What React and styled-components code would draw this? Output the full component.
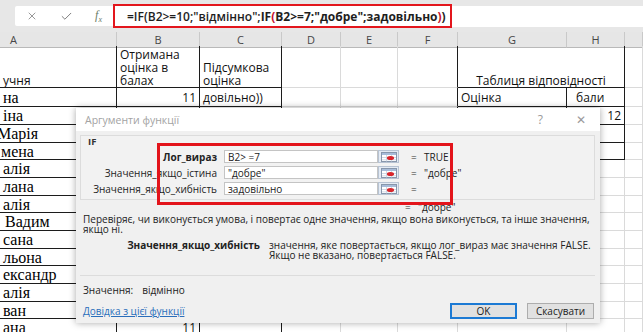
import React from 'react';
import styled, { createGlobalStyle } from 'styled-components';
import { X, Check } from 'lucide-react';

const COLS = [117, 83, 82, 59, 57, 60, 109, 58, 18];
const LETTERS = ['A', 'B', 'C', 'D', 'E', 'F', 'G', 'H', ''];
const TEMPLATE = COLS.map((c) => c + 'px').join(' ');

// visible part of the sheet, column A is scrolled so names are cut on the left
const ROWS = [
  {
    h: 42,
    top: true,
    cells: {
      0: { sans: true, lines: ['учня'] },
      1: { lines: ['Отримана', 'оцінка в', 'балах'] },
      2: { lines: ['Підсумкова', 'оцінка'] },
      6: { lines: ['Таблиця відповідності'], span: 2, center: true },
    },
  },
  {
    h: 19,
    cells: {
      0: { name: 'на' },
      1: { lines: ['11'], right: true },
      2: { lines: ['довільно))'] },
      6: { lines: ['Оцінка'] },
      7: { lines: ['бали'], indent: 9 },
    },
  },
  { h: 18, cells: { 0: { name: 'іна' }, 7: { lines: ['12'], right: true } } },
  { h: 18, cells: { 0: { name: 'Марія', shift: -6 } } },
  { h: 17, cells: { 0: { name: 'мена', shift: -2 } } },
  { h: 18, cells: { 0: { name: 'алія' } } },
  { h: 18, cells: { 0: { name: 'лана' } } },
  { h: 17, cells: { 0: { name: 'алія' } } },
  { h: 18, cells: { 0: { name: 'Вадим', indent: 5 } } },
  { h: 18, cells: { 0: { name: 'сана' } } },
  { h: 17, cells: { 0: { name: 'льона' } } },
  { h: 18, cells: { 0: { name: 'ександр' } } },
  { h: 18, cells: { 0: { name: 'алія' } } },
  { h: 17, cells: { 0: { name: 'ван' } } },
  { h: 18, cells: { 0: { name: 'ана' }, 1: { lines: ['11'], right: true } } },
];

const ARGS = [
  { label: 'Лог_вираз', bold: true, value: 'B2> =7', result: 'TRUE' },
  { label: 'Значення_якщо_істина', value: '"добре"', result: '"добре"' },
  { label: 'Значення_якщо_хибність', value: 'задовільно', result: '' },
];

const GlobalStyle = createGlobalStyle`
  html, body { margin: 0; padding: 0; }
  body {
    background: #fff;
    font-family: "Open Sans", "Noto Sans", sans-serif;
    overflow: hidden;
  }
`;

const Screen = styled.div`
  position: relative;
  width: 643px;
  height: 332px;
  overflow: hidden;
  background: #fff;
`;

const FormulaBar = styled.div`
  display: flex;
  align-items: center;
  height: 32px;
  padding-left: 15px;
  background: #e7e7e7;
`;

const IconBox = styled.div`
  display: grid;
  grid-template-columns: 33px 36px 29px;
  justify-items: center;
  align-items: center;
  width: 98px;
  height: 20px;
  background: #fff;
  border-radius: 2px 0 0 2px;
  color: #6b6b6b;
`;

const Fx = styled.span`
  font-family: "Liberation Serif", serif;
  font-style: italic;
  font-size: 12px;
  color: #6d7d68;
  sub {
    font-size: 8px;
  }
`;

const FormulaInput = styled.div`
  box-sizing: border-box;
  display: flex;
  align-items: center;
  width: 339px;
  height: 24px;
  padding-left: 12px;
  border: 2.5px solid #e3161d;
  background: #fff;
  font-size: 12px;
  font-weight: 600;
  color: #1e1e1e;
  white-space: nowrap;
  b {
    font-weight: 700;
  }
  .paren {
    color: #c8102e;
  }
`;

const FormulaRest = styled.div`
  flex: 1;
  height: 21px;
  background: #fff;
`;

const Sheet = styled.div`
  display: flex;
  flex-direction: column;
`;

const Row = styled.div`
  display: grid;
  grid-template-columns: ${TEMPLATE};
  height: ${(p) => p.$h}px;
`;

const HeaderCell = styled.div`
  box-sizing: border-box;
  display: flex;
  align-items: center;
  justify-content: ${(p) => (p.$left ? 'flex-start' : 'center')};
  padding-left: ${(p) => (p.$left ? 10 : 0)}px;
  background: #e6e6e6;
  border-right: 1px solid #c9c9c9;
  border-bottom: 1px solid #b9b9b9;
  font-size: 11px;
  color: #474747;
`;

const Cell = styled.div`
  box-sizing: border-box;
  grid-column: span ${(p) => p.$span || 1};
  display: flex;
  flex-direction: column;
  justify-content: ${(p) => (p.$top ? 'flex-end' : 'center')};
  align-items: ${(p) => (p.$center ? 'center' : p.$right ? 'flex-end' : 'flex-start')};
  padding: 0 3px 0 ${(p) => p.$indent ?? 3}px;
  border-right: 1px solid ${(p) => (p.$darkR ? '#1c1c1c' : '#dadada')};
  border-bottom: 1px solid ${(p) => (p.$darkB ? '#1c1c1c' : '#dadada')};
  overflow: hidden;
  white-space: nowrap;
  font-size: 12px;
  line-height: 13px;
  color: #111;
`;

const Name = styled.span`
  margin-left: ${(p) => p.$shift || 0}px;
  font-family: "Liberation Serif", "Times New Roman", serif;
  font-size: 16px;
  line-height: 17px;
  color: #000;
`;

const Dialog = styled.div`
  position: absolute;
  left: 76px;
  top: 108px;
  width: 524px;
  height: 215px;
  display: flex;
  flex-direction: column;
  background: #f0f0f0;
  box-shadow: 0 0 7px rgba(0, 0, 0, 0.35);
  font-size: 10px;
  color: #1a1a1a;
`;

const TitleBar = styled.div`
  display: flex;
  align-items: center;
  height: 23px;
  padding-left: 9px;
  background: #fff;
  color: #a3a3a3;
  font-size: 10.5px;
`;

const TitleButtons = styled.div`
  display: flex;
  gap: 33px;
  margin-left: auto;
  margin-right: 14px;
  font-size: 12px;
  color: #9a9a9a;
`;

const Body = styled.div`
  display: flex;
  flex-direction: column;
  flex: 1;
  padding: 4px 5px 0 4px;
`;

const Group = styled.div`
  box-sizing: border-box;
  height: 65px;
  border: 1px solid #dcdcdc;
  background: #f2f2f2;
`;

const GroupLabel = styled.div`
  height: 10px;
  padding: 1px 0 0 7px;
  font-size: 9.5px;
  font-weight: 700;
  line-height: 10px;
  color: #333;
`;

const ArgList = styled.div`
  display: flex;
  flex-direction: column;
  gap: 3px;
  margin-top: 3px;
`;

const ArgRow = styled.div`
  display: flex;
  align-items: center;
  height: 13px;
`;

const ArgLabel = styled.div`
  width: 136px;
  text-align: right;
  font-weight: ${(p) => (p.$bold ? 700 : 400)};
  color: #222;
`;

const ArgInput = styled.div`
  box-sizing: border-box;
  display: flex;
  align-items: center;
  width: 154px;
  height: 13px;
  margin-left: 7px;
  padding-left: 3px;
  background: #fff;
  border: 1px solid #c4c4c4;
  color: #222;
`;

const RefButton = styled.div`
  box-sizing: border-box;
  display: flex;
  align-items: center;
  justify-content: center;
  width: 21px;
  height: 13px;
  background: #e4ebf4;
  border: 1px solid #b7c3d3;
`;

const Eq = styled.span`
  width: 6px;
  margin-left: ${(p) => p.$ml ?? 12}px;
  color: #333;
`;

const EqValue = styled.span`
  margin-left: 7px;
  color: #222;
`;

const ResultLine = styled.div`
  display: flex;
  align-items: center;
  height: 14px;
  padding-left: 325px;
`;

const Text = styled.div`
  padding-left: 3px;
  line-height: 10px;
  color: #222;
`;

const ArgHelp = styled.div`
  display: grid;
  grid-template-columns: 180px 1fr;
  column-gap: 9px;
  margin-top: 6px;
  line-height: 10px;
  color: #222;
  b {
    text-align: right;
    font-weight: 700;
  }
`;

const Separator = styled.div`
  height: 1px;
  margin-top: 15px;
  background: #dcdcdc;
`;

const ValueLine = styled.div`
  display: flex;
  gap: 9px;
  margin-top: 7px;
  padding-left: 3px;
  color: #222;
`;

const Footer = styled.div`
  display: flex;
  align-items: center;
  margin-top: 6px;
  padding-left: 3px;
`;

const HelpLink = styled.a`
  color: #2a6ebb;
  text-decoration: underline;
`;

const Buttons = styled.div`
  display: flex;
  gap: 10px;
  margin-left: auto;
  margin-right: 1px;
`;

const Button = styled.div`
  box-sizing: border-box;
  display: flex;
  align-items: center;
  justify-content: center;
  width: 67px;
  height: 16px;
  background: #e1e1e1;
  border: ${(p) => (p.$primary ? '2px solid #1c7ad4' : '1px solid #adadad')};
  color: #222;
`;

const Highlight = styled.div`
  position: absolute;
  left: 81px;
  top: 35px;
  width: 296px;
  height: 62px;
  box-sizing: border-box;
  border: 3px solid #e3141b;
  pointer-events: none;
`;

function RefIcon() {
  return (
    <svg width="16" height="10" viewBox="0 0 16 10">
      <rect x="0.5" y="0.5" width="15" height="9" fill="#fff" stroke="#8796ab" />
      <rect x="1" y="1" width="14" height="2" fill="#a7bcd9" />
      <path d="M1 5.5h14M1 7.8h14M5.5 3v6.5M10.5 3v6.5" stroke="#c7d1df" strokeWidth="0.8" />
      <ellipse cx="9.5" cy="6" rx="3.6" ry="2" fill="#d8262c" />
    </svg>
  );
}

function cellBorders(row, col) {
  if (col <= 2) return { dr: true, db: true };
  if (col === 5 && row <= 4) return { dr: true, db: false };
  if ((col === 6 || col === 7) && row <= 4) return { dr: true, db: true };
  return { dr: false, db: false };
}

function SheetRow({ row, index }) {
  const out = [];
  for (let c = 0; c < COLS.length; c++) {
    const data = row.cells[c];
    const { dr, db } = cellBorders(index, c);
    out.push(
      <Cell
        key={c}
        $span={data?.span}
        $top={row.top}
        $right={data?.right}
        $center={data?.center}
        $indent={data?.indent}
        $darkR={dr || (data?.span && index <= 4)}
        $darkB={db}
      >
        {data?.name && <Name $shift={data.shift}>{data.name}</Name>}
        {data?.lines && data.lines.map((l) => <span key={l}>{l}</span>)}
      </Cell>
    );
    if (data?.span) c += data.span - 1;
  }
  return <Row $h={row.h}>{out}</Row>;
}

export default function App() {
  return (
    <Screen>
      <GlobalStyle />
      <FormulaBar>
        <IconBox>
          <X size={12} strokeWidth={1.4} />
          <Check size={13} strokeWidth={1.6} />
          <Fx>
            f<sub>x</sub>
          </Fx>
        </IconBox>
        <FormulaInput>
          <span>=IF(B2&gt;=10;"відмінно";</span>
          <b>IF</b>
          <b className="paren">(</b>
          <b>B2&gt;=7;"добре";задовільно</b>
          <b className="paren">)</b>
          <b>)</b>
        </FormulaInput>
        <FormulaRest />
      </FormulaBar>

      <Sheet>
        <Row $h={14}>
          {LETTERS.map((l, i) => (
            <HeaderCell key={i} $left={i === 0}>
              {l}
            </HeaderCell>
          ))}
        </Row>
        {ROWS.map((r, i) => (
          <SheetRow key={i} row={r} index={i} />
        ))}
      </Sheet>

      <Dialog>
        <TitleBar>
          Аргументи функції
          <TitleButtons>
            <span>?</span>
            <span>✕</span>
          </TitleButtons>
        </TitleBar>
        <Body>
          <Group>
            <GroupLabel>IF</GroupLabel>
            <ArgList>
              {ARGS.map((a) => (
                <ArgRow key={a.label}>
                  <ArgLabel $bold={a.bold}>{a.label}</ArgLabel>
                  <ArgInput>{a.value}</ArgInput>
                  <RefButton>
                    <RefIcon />
                  </RefButton>
                  <Eq>=</Eq>
                  <EqValue>{a.result}</EqValue>
                </ArgRow>
              ))}
            </ArgList>
          </Group>
          <ResultLine>
            <Eq $ml={0}>=</Eq>
            <EqValue>"добре"</EqValue>
          </ResultLine>
          <Text>
            Перевіряє, чи виконується умова, і повертає одне значення, якщо вона виконується, та інше значення,
            <br />
            якщо ні.
          </Text>
          <ArgHelp>
            <b>Значення_якщо_хибність</b>
            <span>
              значення, яке повертається, якщо лог_вираз має значення FALSE.
              <br />
              Якщо не вказано, повертається FALSE.
            </span>
          </ArgHelp>
          <Separator />
          <ValueLine>
            <span>Значення:</span>
            <span>відмінно</span>
          </ValueLine>
          <Footer>
            <HelpLink>Довідка з цієї функції</HelpLink>
            <Buttons>
              <Button $primary>OK</Button>
              <Button>Скасувати</Button>
            </Buttons>
          </Footer>
        </Body>
        <Highlight />
      </Dialog>
    </Screen>
  );
}
